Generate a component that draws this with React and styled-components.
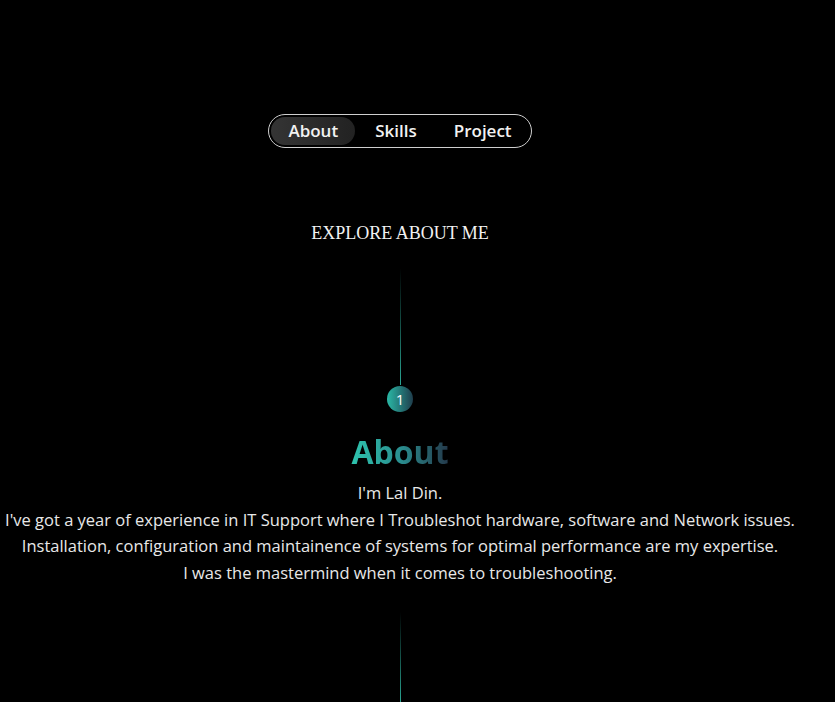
import styled, { createGlobalStyle } from "styled-components";

const GlobalStyle = createGlobalStyle`
  html, body {
    margin: 0;
    padding: 0;
    background: #000;
  }
  body {
    font-family: "Open Sans", "Noto Sans", sans-serif;
    color: #e6e6e6;
  }
`;

const Page = styled.div`
  width: 800px;
  min-height: 702px;
  display: flex;
  flex-direction: column;
  align-items: center;
  padding-top: 114px;
  box-sizing: border-box;
`;

const Nav = styled.nav`
  display: flex;
  align-items: center;
  gap: 3px;
  padding: 2px;
  border: 1px solid #cfcfcf;
  border-radius: 18px;
`;

const NavItem = styled.div`
  padding: 0 17px;
  height: 28px;
  line-height: 28px;
  border-radius: 15px;
  font-size: 17px;
  font-weight: 600;
  color: #f2f2f2;
  background: ${(p) => (p.active ? "linear-gradient(90deg, #343434, #222)" : "transparent")};
  cursor: pointer;
`;

const Eyebrow = styled.h3`
  margin: 75px 0 0;
  font-family: "Liberation Serif", serif;
  font-weight: 400;
  font-size: 18px;
  color: #f2f2f2;
`;

const Line = styled.div`
  width: 1px;
  height: ${(p) => p.h}px;
  margin-top: ${(p) => p.top}px;
  background: linear-gradient(180deg, rgba(43, 191, 170, 0), #2aa593);
`;

const Step = styled.div`
  width: 26px;
  height: 26px;
  margin-top: 1px;
  border-radius: 50%;
  background: linear-gradient(90deg, #2ab8a6, #1f3d4c);
  display: flex;
  align-items: center;
  justify-content: center;
  font-size: 15px;
  color: #fff;
`;

const Title = styled.h2`
  margin: 20px 0 0;
  font-size: 32px;
  font-weight: 700;
  line-height: 40px;
  background: linear-gradient(90deg, #2ec4ae 0%, #2a8f90 50%, #24384a 100%);
  -webkit-background-clip: text;
  background-clip: text;
  color: transparent;
`;

const Text = styled.p`
  margin: 8px 0 0;
  text-align: center;
  font-size: 16.5px;
  line-height: 26.6px;
  color: #e8e8e8;
  white-space: nowrap;
`;

export default function App() {
  return (
    <>
      <GlobalStyle />
      <Page>
        <Nav>
          <NavItem active>About</NavItem>
          <NavItem>Skills</NavItem>
          <NavItem>Project</NavItem>
        </Nav>
        <Eyebrow>EXPLORE ABOUT ME</Eyebrow>
        <Line top={24} h={117} />
        <Step>1</Step>
        <Title>About</Title>
        <Text>
          I'm Lal Din.
          <br />
          I've got a year of experience in IT Support where I Troubleshot hardware, software and Network issues.
          <br />
          Installation, configuration and maintainence of systems for optimal performance are my expertise.
          <br />
          I was the mastermind when it comes to troubleshooting.
        </Text>
        <Line top={26} h={90} />
      </Page>
    </>
  );
}
